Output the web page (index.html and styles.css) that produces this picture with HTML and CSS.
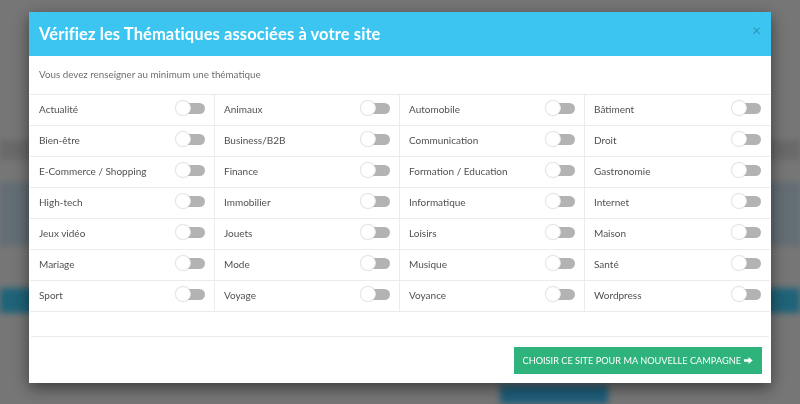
FILE: index.html
```html
<!DOCTYPE html>
<html lang="fr">
<head>
<meta charset="utf-8">
<title>Thématiques du site</title>
<link rel="stylesheet" href="styles.css">
</head>
<body>
  <!-- page behind the dialog -->
  <div class="page">
    <div class="page-head"></div>
    <div class="page-line dark"></div>
    <div class="page-panel"></div>
    <div class="page-line"></div>
    <div class="page-bar"></div>
    <div class="page-line"></div>
    <div class="page-actions"><span class="page-btn"></span></div>
  </div>
  <div class="backdrop"></div>

  <div class="overlay">
    <div class="modal">
      <div class="modal-header">
        <h2 class="modal-title">Vérifiez les Thématiques associées à votre site</h2>
        <span class="close">×</span>
      </div>
      <div class="modal-body">
        <p class="hint">Vous devez renseigner au minimum une thématique</p>
        <div class="themes">
          <div class="cell"><span>Actualité</span><i class="toggle"></i></div>
          <div class="cell"><span>Animaux</span><i class="toggle"></i></div>
          <div class="cell"><span>Automobile</span><i class="toggle"></i></div>
          <div class="cell"><span>Bâtiment</span><i class="toggle"></i></div>
          <div class="cell"><span>Bien-être</span><i class="toggle"></i></div>
          <div class="cell"><span>Business/B2B</span><i class="toggle"></i></div>
          <div class="cell"><span>Communication</span><i class="toggle"></i></div>
          <div class="cell"><span>Droit</span><i class="toggle"></i></div>
          <div class="cell"><span>E-Commerce / Shopping</span><i class="toggle"></i></div>
          <div class="cell"><span>Finance</span><i class="toggle"></i></div>
          <div class="cell"><span>Formation / Education</span><i class="toggle"></i></div>
          <div class="cell"><span>Gastronomie</span><i class="toggle"></i></div>
          <div class="cell"><span>High-tech</span><i class="toggle"></i></div>
          <div class="cell"><span>Immobilier</span><i class="toggle"></i></div>
          <div class="cell"><span>Informatique</span><i class="toggle"></i></div>
          <div class="cell"><span>Internet</span><i class="toggle"></i></div>
          <div class="cell"><span>Jeux vidéo</span><i class="toggle"></i></div>
          <div class="cell"><span>Jouets</span><i class="toggle"></i></div>
          <div class="cell"><span>Loisirs</span><i class="toggle"></i></div>
          <div class="cell"><span>Maison</span><i class="toggle"></i></div>
          <div class="cell"><span>Mariage</span><i class="toggle"></i></div>
          <div class="cell"><span>Mode</span><i class="toggle"></i></div>
          <div class="cell"><span>Musique</span><i class="toggle"></i></div>
          <div class="cell"><span>Santé</span><i class="toggle"></i></div>
          <div class="cell"><span>Sport</span><i class="toggle"></i></div>
          <div class="cell"><span>Voyage</span><i class="toggle"></i></div>
          <div class="cell"><span>Voyance</span><i class="toggle"></i></div>
          <div class="cell"><span>Wordpress</span><i class="toggle"></i></div>
        </div>
      </div>
      <div class="modal-footer">
        <button class="btn-go" type="button">CHOISIR CE SITE POUR MA NOUVELLE CAMPAGNE
          <svg class="arrow" viewBox="0 0 10 10" width="9" height="9"><path d="M0 3.6h5V1l4.6 4-4.6 4V6.4H0z" fill="#fff"/></svg>
        </button>
      </div>
    </div>
  </div>
</body>
</html>
```
FILE: styles.css
```css
html, body {
  margin: 0;
  height: 100%;
  overflow: hidden;
}
body {
  font-family: Lato, "Open Sans", "Liberation Sans", sans-serif;
  background: #ededed;
}

/* blurred page under the dialog */
.page {
  display: flex;
  flex-direction: column;
  height: 404px;
  overflow: hidden;
  filter: blur(3px);
}
.page > div { flex-shrink: 0; }
.page-head { height: 140px; }
.page-line { height: 20px; }
.page-line.dark { background: #d2d2d2; }
.page-panel { height: 64px; margin-top: 22px; background: #c6dbe8; }
.page-bar { height: 25px; margin-top: 22px; background: #3cc6f0; }
.page-actions {
  display: flex;
  padding: 52px 0 0 500px;
}
.page-btn {
  width: 108px;
  height: 19px;
  background: #3ebdf5;
}
.backdrop {
  position: fixed;
  inset: 0;
  background: rgba(0, 0, 0, 0.5);
}

/* dialog */
.overlay {
  position: fixed;
  inset: 0;
}
.modal {
  width: 742px;
  margin: 12px auto 0;
  background: #fff;
  box-shadow: 0 5px 15px rgba(0, 0, 0, 0.5);
}
.modal-header {
  height: 44px;
  background: #3bc5f0;
  display: flex;
  align-items: center;
  justify-content: space-between;
  padding: 0 10px 0 10px;
}
.modal-title {
  margin: 0;
  color: #fff;
  font-size: 16.5px;
  font-weight: 700;
  letter-spacing: 0.1px;
}
.close {
  color: rgba(0, 0, 0, 0.25);
  font-size: 15px;
  line-height: 1;
  margin-top: -8px;
}
.modal-body {
  padding: 11px 1px 0;
}
.hint {
  margin: 0 0 13px;
  padding-left: 9px;
  font-size: 9.8px;
  line-height: 14px;
  color: #6f6f6f;
}
.themes {
  display: grid;
  grid-template-columns: repeat(4, 1fr);
  border-top: 1px solid #ebebeb;
}
.cell {
  box-sizing: border-box;
  height: 31px;
  display: flex;
  align-items: center;
  justify-content: space-between;
  padding: 0 9px 3px 9px;
  border-bottom: 1px solid #ebebeb;
  border-right: 1px solid #ebebeb;
  font-size: 10px;
  color: #505050;
}
.cell:nth-child(4n) { border-right: none; }

/* off switch: grey track with white knob at the left */
.toggle {
  position: relative;
  width: 30px;
  height: 11px;
}
.toggle::before {
  content: "";
  position: absolute;
  left: 5px;
  right: 0;
  top: 0;
  bottom: 0;
  background: #b3b3b3;
  border-radius: 0 6px 6px 0;
}
.toggle::after {
  content: "";
  position: absolute;
  left: 0;
  top: -3px;
  width: 16px;
  height: 16px;
  border-radius: 50%;
  background: #fff;
  border: 1px solid #e6e6e6;
  box-sizing: border-box;
  box-shadow: 0 0 1px rgba(0, 0, 0, 0.1);
}

.modal-footer {
  margin: 24px 2px 0;
  border-top: 1px solid #ebebeb;
  display: flex;
  justify-content: flex-end;
  padding: 10px 7px 9px 0;
}
.btn-go {
  height: 27px;
  padding: 0 9px;
  border: none;
  background: #2db37b;
  color: #fff;
  font-family: inherit;
  font-size: 9.2px;
  display: flex;
  align-items: center;
  gap: 3px;
}
.arrow { display: block; }
```
